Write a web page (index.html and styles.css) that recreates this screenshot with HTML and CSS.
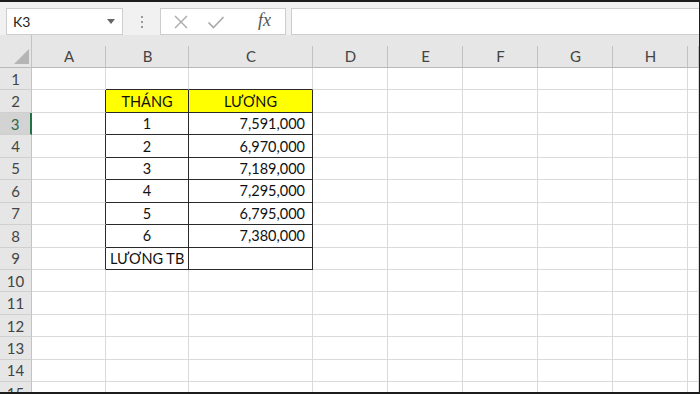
FILE: index.html
```html
<!DOCTYPE html>
<html lang="vi">
<head>
    <meta charset="UTF-8">
    <title>Bảng lương</title>
    <link rel="stylesheet" href="styles.css">
</head>
<body>
<div class="app">
    <div class="toolbar">
        <div class="namebox">
            <span>K3</span>
            <svg class="drop" width="8" height="5" viewBox="0 0 8 5"><path d="M0 0h8L4 5z" fill="#666"/></svg>
        </div>
        <div class="grip"><i></i><i></i><i></i></div>
        <div class="buttons">
            <svg width="16" height="16" viewBox="0 0 16 16"><path d="M2 2l12 12M14 2L2 14" stroke="#a9a9a9" stroke-width="1.4" fill="none"/></svg>
            <svg width="18" height="16" viewBox="0 0 18 16"><path d="M1.5 8.5l5 5L16.5 3" stroke="#a9a9a9" stroke-width="1.6" fill="none"/></svg>
            <span class="fx">fx</span>
        </div>
        <div class="formula"></div>
    </div>

    <div class="sheet">
        <div class="corner"></div>
        <div class="ch">A</div><div class="ch">B</div><div class="ch">C</div><div class="ch">D</div>
        <div class="ch">E</div><div class="ch">F</div><div class="ch">G</div><div class="ch">H</div><div class="ch"></div>

        <div class="rh">1</div>
        <div class="c"></div><div class="c top"></div><div class="c top"></div><div class="c"></div>
        <div class="c"></div><div class="c"></div><div class="c"></div><div class="c"></div><div class="c"></div>

        <div class="rh">2</div>
        <div class="c edge"></div><div class="c t yellow mid">THÁNG</div><div class="c t yellow mid">LƯƠNG</div><div class="c"></div>
        <div class="c"></div><div class="c"></div><div class="c"></div><div class="c"></div><div class="c"></div>

        <div class="rh active">3</div>
        <div class="c edge"></div><div class="c t mid">1</div><div class="c t num">7,591,000</div><div class="c"></div>
        <div class="c"></div><div class="c"></div><div class="c"></div><div class="c"></div><div class="c"></div>

        <div class="rh">4</div>
        <div class="c edge"></div><div class="c t mid">2</div><div class="c t num">6,970,000</div><div class="c"></div>
        <div class="c"></div><div class="c"></div><div class="c"></div><div class="c"></div><div class="c"></div>

        <div class="rh">5</div>
        <div class="c edge"></div><div class="c t mid">3</div><div class="c t num">7,189,000</div><div class="c"></div>
        <div class="c"></div><div class="c"></div><div class="c"></div><div class="c"></div><div class="c"></div>

        <div class="rh">6</div>
        <div class="c edge"></div><div class="c t mid">4</div><div class="c t num">7,295,000</div><div class="c"></div>
        <div class="c"></div><div class="c"></div><div class="c"></div><div class="c"></div><div class="c"></div>

        <div class="rh">7</div>
        <div class="c edge"></div><div class="c t mid">5</div><div class="c t num">6,795,000</div><div class="c"></div>
        <div class="c"></div><div class="c"></div><div class="c"></div><div class="c"></div><div class="c"></div>

        <div class="rh">8</div>
        <div class="c edge"></div><div class="c t mid">6</div><div class="c t num">7,380,000</div><div class="c"></div>
        <div class="c"></div><div class="c"></div><div class="c"></div><div class="c"></div><div class="c"></div>

        <div class="rh">9</div>
        <div class="c edge"></div><div class="c t">LƯƠNG TB</div><div class="c t"></div><div class="c"></div>
        <div class="c"></div><div class="c"></div><div class="c"></div><div class="c"></div><div class="c"></div>

        <div class="rh">10</div>
        <div class="c"></div><div class="c"></div><div class="c"></div><div class="c"></div>
        <div class="c"></div><div class="c"></div><div class="c"></div><div class="c"></div><div class="c"></div>

        <div class="rh">11</div>
        <div class="c"></div><div class="c"></div><div class="c"></div><div class="c"></div>
        <div class="c"></div><div class="c"></div><div class="c"></div><div class="c"></div><div class="c"></div>

        <div class="rh">12</div>
        <div class="c"></div><div class="c"></div><div class="c"></div><div class="c"></div>
        <div class="c"></div><div class="c"></div><div class="c"></div><div class="c"></div><div class="c"></div>

        <div class="rh">13</div>
        <div class="c"></div><div class="c"></div><div class="c"></div><div class="c"></div>
        <div class="c"></div><div class="c"></div><div class="c"></div><div class="c"></div><div class="c"></div>

        <div class="rh">14</div>
        <div class="c"></div><div class="c"></div><div class="c"></div><div class="c"></div>
        <div class="c"></div><div class="c"></div><div class="c"></div><div class="c"></div><div class="c"></div>

        <div class="rh">15</div>
        <div class="c"></div><div class="c"></div><div class="c"></div><div class="c"></div>
        <div class="c"></div><div class="c"></div><div class="c"></div><div class="c"></div><div class="c"></div>
    </div>
</div>
</body>
</html>
```

FILE: styles.css
```css
html, body {
    margin: 0;
    overflow: hidden;
}

body {
    font-family: Lato, "Open Sans", sans-serif;
    color: #111;
}

.app {
    box-sizing: border-box;
    width: 700px;
    height: 394px;
    border-top: 2px solid #1c1c1c;
    border-right: 1px solid #1c1c1c;
    border-bottom: 2px solid #1c1c1c;
    background: #fff;
    overflow: hidden;
    display: flex;
    flex-direction: column;
}

/* formula bar */
.toolbar {
    flex: none;
    height: 33px;
    box-sizing: border-box;
    padding: 6px 0 0 6px;
    background: #f1f1f1;
    display: flex;
    align-items: flex-start;
}

.namebox, .buttons, .formula {
    box-sizing: border-box;
    height: 27px;
    background: #fff;
    border: 1px solid #cdcdcd;
}

.namebox {
    width: 117px;
    display: flex;
    align-items: center;
    justify-content: space-between;
    padding: 0 7px 0 6px;
    font-size: 14px;
    color: #222;
}

.grip {
    width: 37px;
    height: 27px;
    display: flex;
    flex-direction: column;
    align-items: center;
    justify-content: center;
    gap: 3px;
}

.grip i {
    width: 2px;
    height: 2px;
    background: #9a9a9a;
}

.buttons {
    width: 126px;
    display: flex;
    align-items: center;
    padding-left: 12px;
    gap: 18px;
}

.fx {
    font-family: "Liberation Serif", serif;
    font-style: italic;
    font-size: 18px;
    color: #555;
    margin-left: 15px;
    margin-top: -2px;
}

.formula {
    flex: 1;
    margin-left: 5px;
    border-right: none;
}

/* grid */
.sheet {
    display: grid;
    grid-template-columns: 32px 74px 83px 124px 75px 75px 75px 75px 75px 1fr;
    grid-template-rows: 33px;
    grid-auto-rows: 22.45px;
    font-size: 14.5px;
}

.corner, .ch {
    background: #e6e6e6;
    border-bottom: 1px solid #b9b9b9;
    box-sizing: border-box;
}

.corner {
    position: relative;
    border-right: 1px solid #c3c3c3;
}

.corner::after {
    content: "";
    position: absolute;
    right: 2px;
    bottom: 3px;
    border-style: solid;
    border-width: 0 0 15px 15px;
    border-color: transparent transparent #b5b5b5 transparent;
}

.ch {
    display: flex;
    align-items: flex-end;
    justify-content: center;
    padding-bottom: 2px;
    color: #444;
    font-size: 15px;
    background-image: linear-gradient(#c2c2c2, #c2c2c2);
    background-repeat: no-repeat;
    background-position: right bottom;
    background-size: 1px 21px;
}

.rh {
    box-sizing: border-box;
    background: #e6e6e6;
    border-right: 1px solid #c3c3c3;
    border-bottom: 1px solid #cfcfcf;
    display: flex;
    align-items: center;
    justify-content: center;
    color: #444;
    font-size: 15px;
}

.rh.active {
    background: #d3d3d3;
    color: #2f6a47;
    border-right: 2px solid #217346;
}

.c {
    box-sizing: border-box;
    border-right: 1px solid #dadada;
    border-bottom: 1px solid #dadada;
    display: flex;
    align-items: center;
    padding: 0 4px;
    white-space: nowrap;
}

.c.edge {
    border-right-color: #2a2a2a;
}

.c.top {
    border-bottom-color: #2a2a2a;
}

.c.t {
    border-right-color: #2a2a2a;
    border-bottom-color: #2a2a2a;
}

.yellow {
    background: #ffff00;
}

.mid {
    justify-content: center;
}

.num {
    justify-content: flex-end;
    padding-right: 7px;
}
```
